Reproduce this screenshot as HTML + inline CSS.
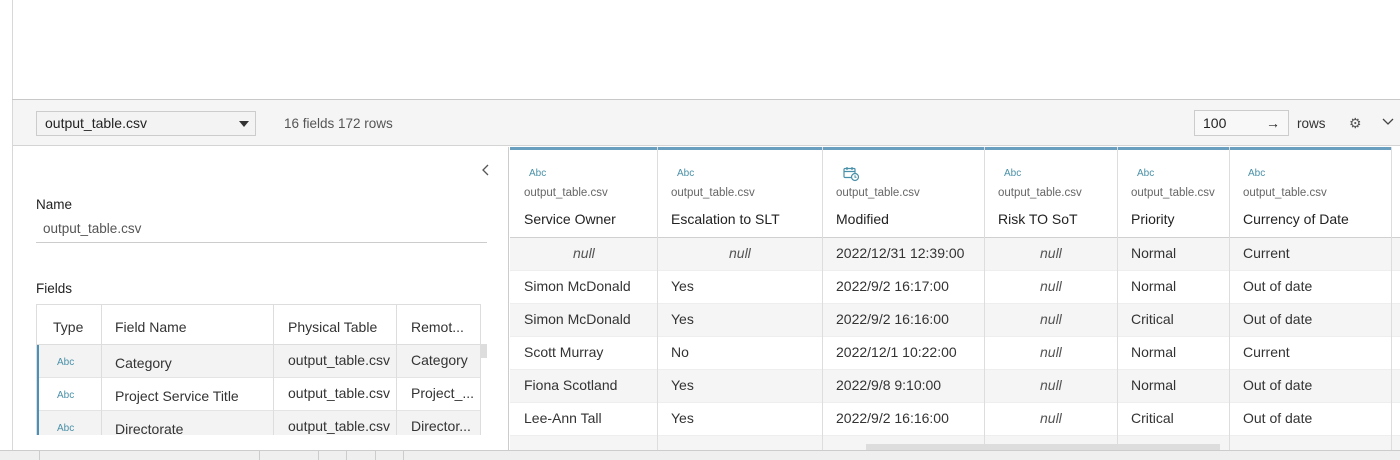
<!DOCTYPE html>
<html><head><style>
*{box-sizing:border-box;margin:0;padding:0}
body{width:1400px;height:460px;position:relative;overflow:hidden;background:#fff;font-family:"Liberation Sans",sans-serif;color:#333;font-size:14px}
.a{position:absolute}
.abc{color:#4a90a8;font-size:10px}
.sub{color:#666;font-size:11.5px}
.hd{font-size:14px;color:#222}
.cell{position:absolute;height:33px;line-height:33px;font-size:14px;color:#333;white-space:nowrap}
.nul{font-style:italic;color:#555}
</style></head><body>
<div class="a" style="left:12px;top:0;width:1px;height:460px;background:#d8d8d8"></div>
<div class="a" style="left:12px;top:99px;width:1388px;height:1px;background:#c8c8c8"></div>
<div class="a" style="left:13px;top:100px;width:1387px;height:46px;background:#f5f5f5;border-bottom:1px solid #d4d4d4"></div>
<div class="a" style="left:36px;top:111px;width:220px;height:25px;border:1px solid #ccc;background:#f3f3f3;padding-left:8px;line-height:23px;font-size:14px;color:#222">output_table.csv
<div class="a" style="right:6px;top:9px;border-left:5px solid transparent;border-right:5px solid transparent;border-top:6px solid #333"></div></div>
<div class="a" style="left:284px;top:116px;color:#555;font-size:13.5px">16 fields 172 rows</div>
<div class="a" style="left:1194px;top:110px;width:95px;height:26px;border:1px solid #ccc;background:#f8f8f8;padding-left:8px;line-height:24px;font-size:14px;color:#222">100<span class="a" style="right:8px;top:0">→</span></div>
<div class="a" style="left:1297px;top:116px;font-size:13.5px;color:#333">rows</div>
<div class="a" style="left:1349px;top:115px;font-size:14px;color:#555">⚙</div>
<svg class="a" style="left:1382px;top:118px" width="12" height="8"><path d="M1 1l5 5 5-5" stroke="#444" fill="none" stroke-width="1.3"/></svg>

<!-- left panel -->
<div class="a" style="left:13px;top:147px;width:496px;height:303px;background:#fff;border-right:1px solid #ccc"></div>
<svg class="a" style="left:482px;top:164px" width="8" height="12"><path d="M6 1L1 6l5 5" stroke="#555" fill="none" stroke-width="1.3"/></svg>
<div class="a" style="left:36px;top:197px;font-size:13.5px;color:#222">Name</div>
<div class="a" style="left:43px;top:221px;font-size:13.5px;color:#555">output_table.csv</div>
<div class="a" style="left:36px;top:242px;width:451px;height:1px;background:#ccc"></div>
<div class="a" style="left:36px;top:281px;font-size:13.5px;color:#222">Fields</div>
<div class="a" style="left:36px;top:304px;width:445px;height:131px;border:1px solid #ddd;border-bottom:none;overflow:hidden">
<div class="a" style="left:0;top:0;width:445px;height:40px;background:#fff;border-bottom:1px solid #ddd"></div>
<div class="a" style="left:0;top:40px;width:445px;height:33px;background:#f3f3f3;border-bottom:1px solid #e4e4e4"></div>
<div class="a" style="left:0;top:73px;width:445px;height:33px;background:#fff;border-bottom:1px solid #e4e4e4"></div>
<div class="a" style="left:0;top:106px;width:445px;height:33px;background:#f3f3f3"></div>
<div class="a" style="left:0;top:40px;width:2px;height:100px;background:#4a90b8"></div>
<div class="a" style="left:64px;top:0;width:1px;height:140px;background:#ddd"></div>
<div class="a" style="left:236px;top:0;width:1px;height:140px;background:#ddd"></div>
<div class="a" style="left:359px;top:0;width:1px;height:140px;background:#ddd"></div>
<div class="a" style="left:16px;top:14px" class="hd">Type</div>
<div class="a" style="left:78px;top:14px">Field Name</div>
<div class="a" style="left:251px;top:14px">Physical Table</div>
<div class="a" style="left:374px;top:14px">Remot...</div>
<div class="a abc" style="left:20px;top:52px">Abc</div>
<div class="a" style="left:78px;top:50px">Category</div>
<div class="a" style="left:251px;top:47px">output_table.csv</div>
<div class="a" style="left:374px;top:47px">Category</div>
<div class="a abc" style="left:20px;top:85px">Abc</div>
<div class="a" style="left:78px;top:83px">Project Service Title</div>
<div class="a" style="left:251px;top:80px">output_table.csv</div>
<div class="a" style="left:374px;top:80px">Project_...</div>
<div class="a abc" style="left:20px;top:118px">Abc</div>
<div class="a" style="left:78px;top:116px">Directorate</div>
<div class="a" style="left:251px;top:113px">output_table.csv</div>
<div class="a" style="left:374px;top:113px">Director...</div>
</div>
<div class="a" style="left:480px;top:344px;width:7px;height:14px;background:#ddd"></div>

<!-- grid -->
<div class="a" style="left:510px;top:147px;width:890px;height:303px;background:#fff;overflow:hidden">
<div class="a" style="left:0;top:0;width:881px;height:3px;background:#6a9fc0"></div>
<div class="a" style="left:0;top:90px;width:890px;height:1px;background:#d0d0d0"></div>
<div class="a" style="left:0;top:91px;width:890px;height:32px;background:#f5f5f5"></div>
<div class="a" style="left:0;top:124px;width:890px;height:32px;background:#fff"></div>
<div class="a" style="left:0;top:157px;width:890px;height:32px;background:#f5f5f5"></div>
<div class="a" style="left:0;top:190px;width:890px;height:32px;background:#fff"></div>
<div class="a" style="left:0;top:223px;width:890px;height:32px;background:#f5f5f5"></div>
<div class="a" style="left:0;top:256px;width:890px;height:32px;background:#fff"></div>
<div class="a" style="left:0;top:289px;width:890px;height:20px;background:#f5f5f5"></div>
<div class="a" style="left:0;top:123px;width:890px;height:1px;background:#eee"></div>
<div class="a" style="left:0;top:156px;width:890px;height:1px;background:#eee"></div>
<div class="a" style="left:0;top:189px;width:890px;height:1px;background:#eee"></div>
<div class="a" style="left:0;top:222px;width:890px;height:1px;background:#eee"></div>
<div class="a" style="left:0;top:255px;width:890px;height:1px;background:#eee"></div>
<div class="a" style="left:0;top:288px;width:890px;height:1px;background:#eee"></div>
<div class="a" style="left:147px;top:0;width:1px;height:303px;background:#ddd"></div>
<div class="a" style="left:312px;top:0;width:1px;height:303px;background:#ddd"></div>
<div class="a" style="left:474px;top:0;width:1px;height:303px;background:#ddd"></div>
<div class="a" style="left:607px;top:0;width:1px;height:303px;background:#ddd"></div>
<div class="a" style="left:719px;top:0;width:1px;height:303px;background:#ddd"></div>
<div class="a" style="left:881px;top:0;width:1px;height:303px;background:#ddd"></div>
<div class="a" style="left:356px;top:297px;width:354px;height:6px;background:#ddd"></div>
</div>
<!-- headers -->
<div class="a abc" style="left:529px;top:168px">Abc</div><div class="a sub" style="left:524px;top:187px">output_table.csv</div><div class="a hd" style="left:524px;top:211px">Service Owner</div>
<div class="a abc" style="left:677px;top:168px">Abc</div><div class="a sub" style="left:671px;top:187px">output_table.csv</div><div class="a hd" style="left:671px;top:211px">Escalation to SLT</div>
<svg class="a" style="left:843px;top:166px" width="17" height="16"><rect x="1" y="2.5" width="11" height="9" rx="1" fill="none" stroke="#4a90a8" stroke-width="1.2"/><path d="M1 5.5h11M4 1v3M9 1v3" stroke="#4a90a8" stroke-width="1.2"/><circle cx="12" cy="11" r="3.5" fill="#fff" stroke="#4a90a8" stroke-width="1.2"/><path d="M12 9.3v1.9h1.5" stroke="#4a90a8" fill="none"/></svg>
<div class="a sub" style="left:836px;top:187px">output_table.csv</div><div class="a hd" style="left:836px;top:211px">Modified</div>
<div class="a abc" style="left:1004px;top:168px">Abc</div><div class="a sub" style="left:998px;top:187px">output_table.csv</div><div class="a hd" style="left:998px;top:211px">Risk TO SoT</div>
<div class="a abc" style="left:1137px;top:168px">Abc</div><div class="a sub" style="left:1131px;top:187px">output_table.csv</div><div class="a hd" style="left:1131px;top:211px">Priority</div>
<div class="a abc" style="left:1248px;top:168px">Abc</div><div class="a sub" style="left:1243px;top:187px">output_table.csv</div><div class="a hd" style="left:1243px;top:211px">Currency of Date</div>
<!-- rows -->
<div class="cell nul" style="left:573px;top:237px">null</div><div class="cell nul" style="left:729px;top:237px">null</div><div class="cell" style="left:836px;top:237px">2022/12/31 12:39:00</div><div class="cell nul" style="left:1040px;top:237px">null</div><div class="cell" style="left:1131px;top:237px">Normal</div><div class="cell" style="left:1243px;top:237px">Current</div>
<div class="cell" style="left:524px;top:270px">Simon McDonald</div><div class="cell" style="left:671px;top:270px">Yes</div><div class="cell" style="left:836px;top:270px">2022/9/2 16:17:00</div><div class="cell nul" style="left:1040px;top:270px">null</div><div class="cell" style="left:1131px;top:270px">Normal</div><div class="cell" style="left:1243px;top:270px">Out of date</div>
<div class="cell" style="left:524px;top:303px">Simon McDonald</div><div class="cell" style="left:671px;top:303px">Yes</div><div class="cell" style="left:836px;top:303px">2022/9/2 16:16:00</div><div class="cell nul" style="left:1040px;top:303px">null</div><div class="cell" style="left:1131px;top:303px">Critical</div><div class="cell" style="left:1243px;top:303px">Out of date</div>
<div class="cell" style="left:524px;top:336px">Scott Murray</div><div class="cell" style="left:671px;top:336px">No</div><div class="cell" style="left:836px;top:336px">2022/12/1 10:22:00</div><div class="cell nul" style="left:1040px;top:336px">null</div><div class="cell" style="left:1131px;top:336px">Normal</div><div class="cell" style="left:1243px;top:336px">Current</div>
<div class="cell" style="left:524px;top:369px">Fiona Scotland</div><div class="cell" style="left:671px;top:369px">Yes</div><div class="cell" style="left:836px;top:369px">2022/9/8 9:10:00</div><div class="cell nul" style="left:1040px;top:369px">null</div><div class="cell" style="left:1131px;top:369px">Normal</div><div class="cell" style="left:1243px;top:369px">Out of date</div>
<div class="cell" style="left:524px;top:402px">Lee-Ann Tall</div><div class="cell" style="left:671px;top:402px">Yes</div><div class="cell" style="left:836px;top:402px">2022/9/2 16:16:00</div><div class="cell nul" style="left:1040px;top:402px">null</div><div class="cell" style="left:1131px;top:402px">Critical</div><div class="cell" style="left:1243px;top:402px">Out of date</div>
<!-- bottom strip -->
<div class="a" style="left:0;top:450px;width:1400px;height:10px;background:#efefef;border-top:1px solid #ccc"></div>
<div class="a" style="left:39px;top:451px;width:1px;height:9px;background:#ccc"></div>
<div class="a" style="left:259px;top:451px;width:1px;height:9px;background:#ccc"></div>
<div class="a" style="left:318px;top:451px;width:1px;height:9px;background:#ccc"></div>
<div class="a" style="left:346px;top:451px;width:1px;height:9px;background:#ccc"></div>
<div class="a" style="left:375px;top:451px;width:1px;height:9px;background:#ccc"></div>
<div class="a" style="left:403px;top:451px;width:1px;height:9px;background:#ccc"></div>
</body></html>
